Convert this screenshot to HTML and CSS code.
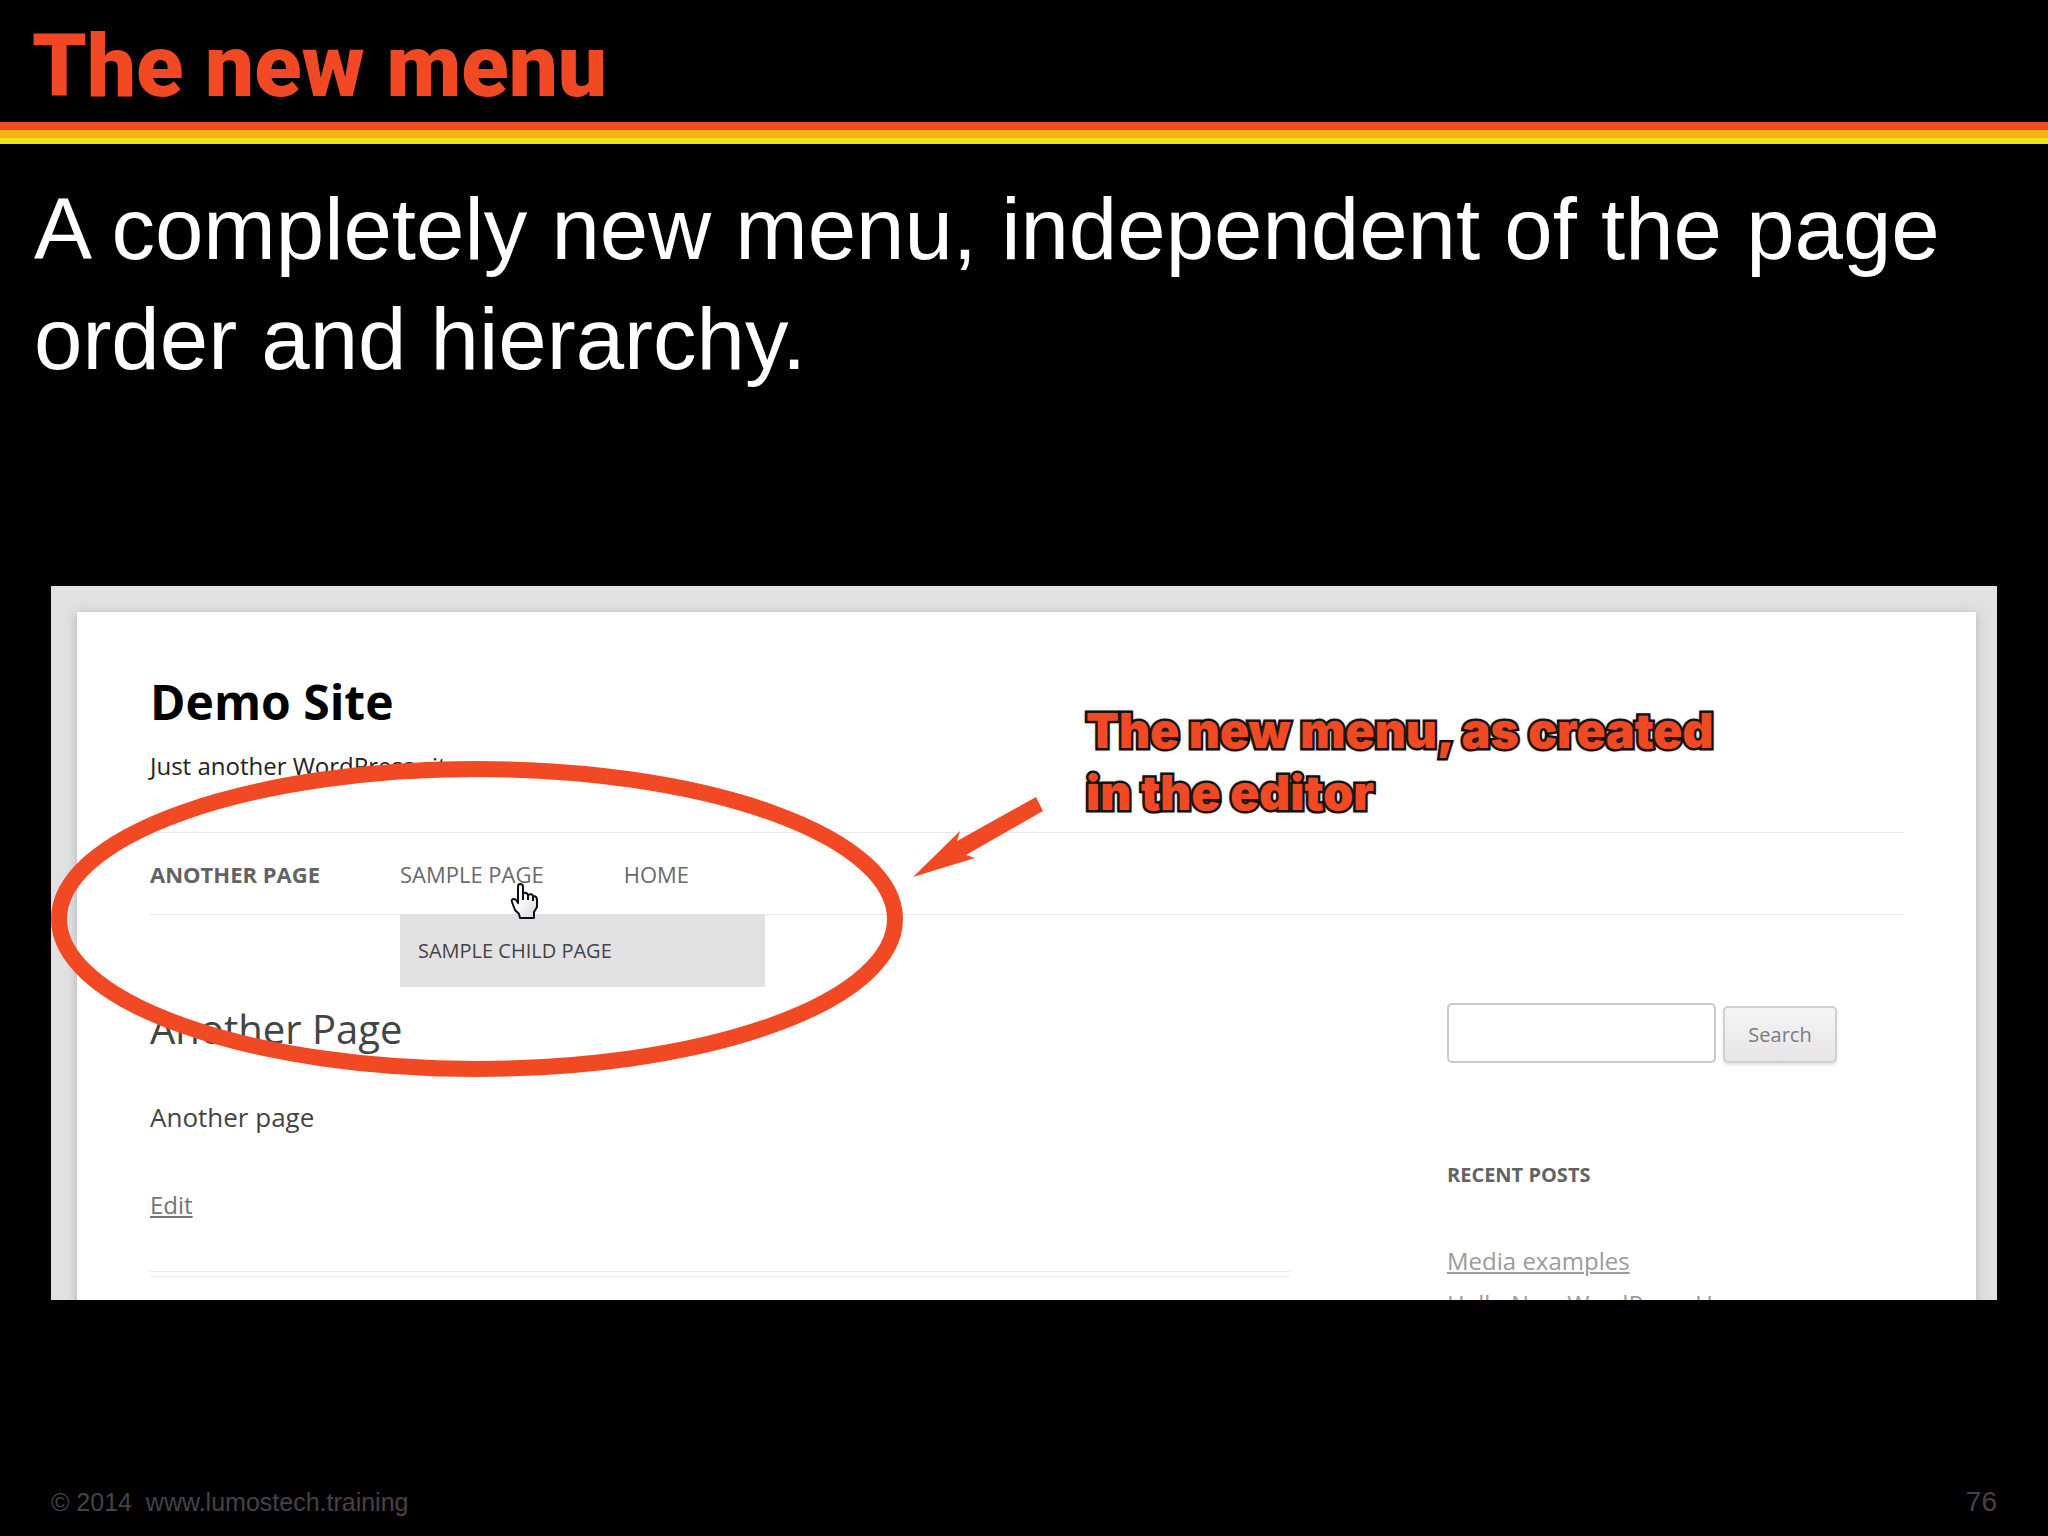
FILE: index.html
```html
<!DOCTYPE html>
<html lang="en">
<head>
    <meta charset="UTF-8">
    <title>The new menu</title>
    <link rel="stylesheet" href="styles.css">
</head>
<body>

<header class="slide-header">
    <h1>The new menu</h1>
</header>
<div class="stripes"></div>

<main class="slide-body">
    <p class="lead">A completely new menu, independent of the page order and hierarchy.</p>

    <div class="shot">
        <div class="site">
            <h2 class="site-title">Demo Site</h2>
            <p class="site-tagline">Just another WordPress site</p>

            <nav class="site-nav">
                <a class="current" href="#">ANOTHER PAGE</a>
                <div class="has-child">
                    <a href="#">SAMPLE PAGE</a>
                    <div class="submenu"><a href="#">SAMPLE CHILD PAGE</a></div>
                </div>
                <a href="#">HOME</a>
            </nav>

            <div class="columns">
                <article class="entry">
                    <h3>Another Page</h3>
                    <p>Another page</p>
                    <a class="edit" href="#">Edit</a>
                    <hr class="rule">
                </article>
                <aside class="sidebar">
                    <form class="search">
                        <input type="text" aria-label="Search for">
                        <button type="button">Search</button>
                    </form>
                    <h4>RECENT POSTS</h4>
                    <ul>
                        <li><a href="#">Media examples</a></li>
                        <li><a href="#">Hello New WordPress User</a></li>
                    </ul>
                </aside>
            </div>
        </div>

        <!-- callout: ring, arrow and mouse pointer -->
        <svg class="marks" width="1000" height="520" viewBox="0 0 1000 520">
            <defs>
                <linearGradient id="hand" x1="0" y1="0" x2="1" y2="1">
                    <stop offset="0.4" stop-color="#ffffff"/>
                    <stop offset="1" stop-color="#d4d4da"/>
                </linearGradient>
            </defs>
            <g transform="translate(459 297)">
                <path d="M8 20V4Q8 1 10 1Q13 1 13 4V10Q17 9 18 12Q22 10 23 13Q27 13 27 17V24L24 29V35H10L9 31L5 27L2 19Q1 16 4 16Q6 16 8 20Z" fill="url(#hand)" stroke="#0c0c1c" stroke-width="2" stroke-linejoin="round"/>
                <path d="M13 10V17M18 12V17M23 13V18" fill="none" stroke="#0c0c1c" stroke-width="2"/>
            </g>
            <ellipse cx="426" cy="333" rx="418" ry="150" fill="none" stroke="#f04923" stroke-width="16"/>
            <path d="M862 291L909 245L906 255L985 211L992 225L915 269L924 272Z" fill="#f04923"/>
        </svg>
        <p class="caption">The new menu, as created<br>in the editor</p>
    </div>
</main>

<footer class="slide-footer">
    <span>© 2014&nbsp; www.lumostech.training</span>
    <span class="number">76</span>
</footer>

</body>
</html>
```

FILE: styles.css
```css
body {
    margin: 0;
    min-height: 100vh;
    display: flex;
    flex-direction: column;
    font-family: 'Open Sans', sans-serif;
    background: #020003;
    color: #ffffff;
}

h1, h2, h3, h4, p, ul {
    margin: 0;
    padding: 0;
}

.slide-header {
    padding: 16px 32px 6px;
    background: #000000;
}

h1 {
    font-family: 'Roboto', sans-serif;
    font-size: 87px;
    line-height: 100px;
    font-weight: 900;
    color: #f04923;
}

.stripes {
    height: 22px;
    background: linear-gradient(#f04923 8px, #fbb018 8px, #fbb018 16px, #ebe31c 16px);
}

.slide-body {
    flex: 1;
}

.lead {
    padding: 30px 34px 34px;
    font-family: 'Liberation Sans', sans-serif;
    font-size: 87px;
    line-height: 110px;
}

/* captured web page */
.shot {
    position: relative;
    max-height: 714px;
    margin: 158px 51px 0;
    overflow: hidden;
    background: #e1e1e3;
}

.site {
    margin: 26px 21px 0 26px;
    padding: 56px 72px 0 73px;
    background: #ffffff;
    box-shadow: 0 2px 10px rgba(60, 70, 70, 0.3);
}

.site-title {
    font-size: 48px;
    line-height: 68px;
    color: #000000;
}

.site-tagline {
    margin-top: 12px;
    font-size: 24px;
    line-height: 36px;
    color: #222222;
}

.site-nav {
    display: flex;
    gap: 80px;
    height: 81px;
    margin-top: 48px;
    border-top: 1px solid #e8e8ea;
    border-bottom: 1px solid #e8e8ea;
    font-size: 22px;
    line-height: 82px;
}

.site-nav a {
    color: #6a6a6a;
    text-decoration: none;
}

.site-nav .current {
    font-weight: bold;
    color: #636363;
}

.has-child {
    position: relative;
}

.submenu {
    position: absolute;
    top: 81px;
    left: 0;
    width: 347px;
    padding: 1px 0 0 18px;
    background: #e4e1e4;
    font-size: 20px;
    line-height: 72px;
}

.site-nav .submenu a {
    color: #444444;
}

.columns {
    display: grid;
    grid-template-columns: 1140px 1fr;
    gap: 157px;
    padding-top: 88px;
}

.entry {
    color: #444444;
}

.entry h3 {
    font-size: 40px;
    line-height: 52px;
    font-weight: 400;
}

.entry p {
    margin: 42px 0 50px;
    font-size: 26px;
    line-height: 40px;
}

.edit {
    font-size: 24px;
    line-height: 36px;
    color: #757575;
}

.rule {
    height: 4px;
    margin: 48px 0 0;
    border: solid #ebe9ed;
    border-width: 1px 0;
}

.search {
    display: flex;
    align-items: flex-end;
    gap: 7px;
}

.search input {
    box-sizing: border-box;
    width: 269px;
    height: 60px;
    border: 2px solid #cccacc;
    border-radius: 5px;
}

.search button {
    width: 114px;
    height: 57px;
    border: 2px solid #d2d0d3;
    border-radius: 5px;
    background: linear-gradient(#f6f4f7, #e7e5e8);
    box-shadow: 0 2px 3px rgba(60, 60, 60, 0.15);
    font-family: inherit;
    font-size: 20px;
    color: #7c7c7c;
}

.sidebar h4 {
    margin: 98px 0 50px;
    font-size: 20px;
    line-height: 28px;
    color: #636363;
}

.sidebar ul {
    list-style: none;
    font-size: 24px;
    line-height: 43px;
}

.sidebar a {
    color: #9c9a9c;
}

.marks {
    position: absolute;
    top: 0;
    left: 0;
}

.caption {
    position: absolute;
    top: 114px;
    left: 1035px;
    font-family: 'Inter', sans-serif;
    font-size: 48px;
    line-height: 62px;
    font-weight: 900;
    color: #f04923;
    -webkit-text-stroke: 5px #100808;
    paint-order: stroke fill;
    text-shadow: 0 0 4px #333333;
}

.slide-footer {
    display: flex;
    justify-content: space-between;
    align-items: center;
    padding: 0 51px 18px;
    font-family: 'Liberation Sans', sans-serif;
    font-size: 25px;
    line-height: 32px;
    color: #444246;
}

.number {
    font-size: 28px;
}
```
